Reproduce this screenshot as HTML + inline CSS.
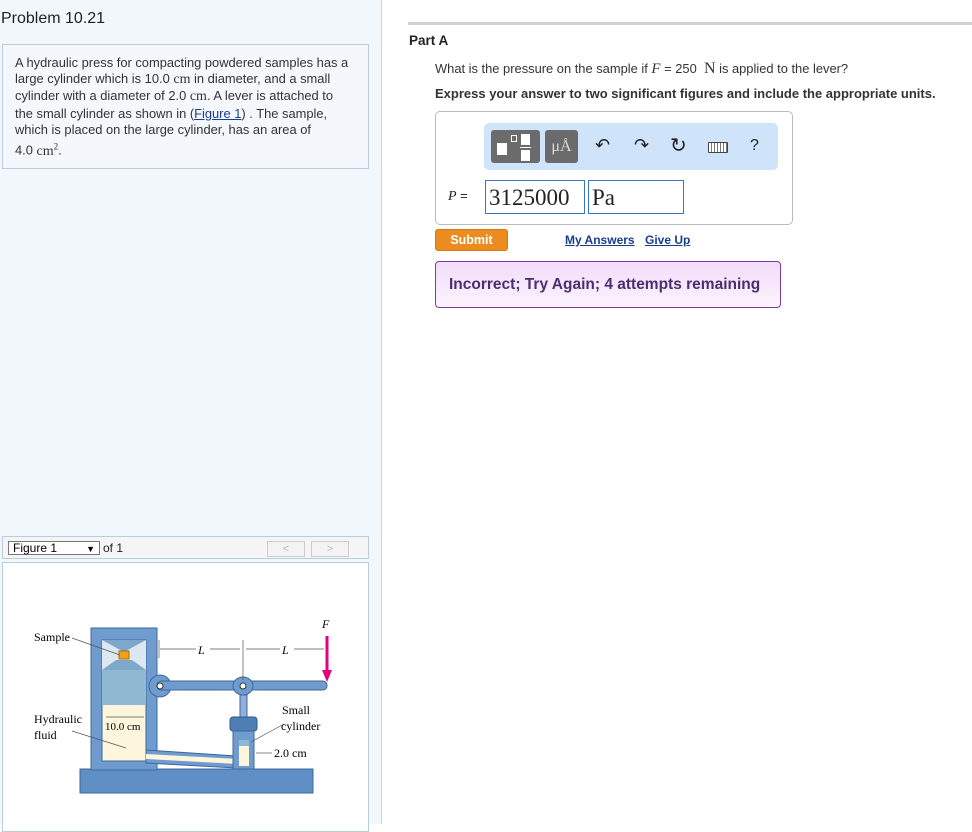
<!DOCTYPE html>
<html><head><meta charset="utf-8">
<style>
*{margin:0;padding:0;box-sizing:border-box}
body{width:972px;height:824px;background:#fff;font-family:"Liberation Sans",Arial,sans-serif;position:relative;overflow:hidden;color:#333}
.left{position:absolute;left:0;top:0;width:382px;height:824px;background:#f2f7fc;border-right:1px solid #c9d9ea}
.title{position:absolute;left:1px;top:10px;font-size:16px;color:#222}
.box{position:absolute;left:2px;top:44px;width:367px;height:125px;border:1px solid #b9cce0;background:#f4f8fc;padding:10px 16px 10px 12px;font-size:12.9px;line-height:16.2px;color:#333}
.box a{color:#1a3e8c;text-decoration:underline}
.m{font-family:"Liberation Serif",serif;font-size:14px}
.fighead{position:absolute;left:2px;top:536px;width:367px;height:23px;border:1px solid #b9cce0;background:#f5f5f5}
.sel{position:absolute;left:5px;top:4px;width:92px;height:14px;border:1px solid #777;background:#fff;font-size:12px;line-height:12px;padding-left:4px;color:#000}
.sel span{position:absolute;right:4px;top:1px;font-size:9px}
.of1{position:absolute;left:100px;top:4px;font-size:12px;color:#222}
.nb{position:absolute;top:4px;width:38px;height:16px;border:1px solid #ccc;background:#f3f3f3;color:#bbb;font-size:11px;text-align:center;line-height:15px}
.figbox{position:absolute;left:2px;top:562px;width:367px;height:270px;border:1px solid #b9cce0;background:#fff}
.hr{position:absolute;left:408px;top:22px;width:564px;height:3px;background:#d2d2d2}
.parta{position:absolute;left:409px;top:33px;font-size:13.5px;font-weight:bold;color:#222}
.q{position:absolute;left:435px;top:60px;font-size:12.9px;color:#333}
.ex{position:absolute;left:435px;top:86px;font-size:13px;font-weight:bold;color:#333}
.ans{position:absolute;left:435px;top:111px;width:358px;height:114px;border:1px solid #bbb;border-radius:5px;background:#fff}
.tb{position:absolute;left:48px;top:11px;width:294px;height:47px;background:#cfe4fb;border-radius:5px}
.b1{position:absolute;left:7px;top:7px;width:49px;height:33px;background:#6b6b6b;border-radius:3px}
.b2{position:absolute;left:61px;top:7px;width:33px;height:33px;background:#6b6b6b;border-radius:3px;color:#ddd;font-family:"Liberation Serif",serif;font-size:16px;text-align:center;line-height:34px}
.ic{position:absolute;top:12px;font-size:18px;color:#222}
.plabel{position:absolute;left:12px;top:76px;font-size:13px;color:#222}
.in1{position:absolute;left:49px;top:68px;width:100px;height:34px;border:1px solid #3b73c9;font-family:"Liberation Serif",serif;font-size:23px;padding-left:3px;line-height:33px;color:#222}
.in2{position:absolute;left:152px;top:68px;width:96px;height:34px;border:1px solid #3b73c9;font-family:"Liberation Serif",serif;font-size:23px;padding-left:3px;line-height:33px;color:#222}
.submit{position:absolute;left:435px;top:229px;width:73px;height:22px;background:#ec8b1f;border:1px solid #d7771a;border-radius:3px;color:#fff;font-weight:bold;font-size:12.5px;text-align:center;line-height:20px}
.lnk{position:absolute;top:233px;font-size:12px;font-weight:bold;color:#1a3e8c;text-decoration:underline}
.inc{position:absolute;left:435px;top:261px;width:346px;height:47px;border:1px solid #7d3b9c;border-radius:4px;background:linear-gradient(#f2dcfa,#fbf3fd);font-weight:bold;font-size:15.5px;color:#4a2f6e;padding-left:13px;line-height:45px}
</style></head><body>
<div class="left">
<div class="title">Problem 10.21</div>
<div class="box">A hydraulic press for compacting powdered samples has a large cylinder which is 10.0 <span class="m">cm</span> in diameter, and a small cylinder with a diameter of 2.0 <span class="m">cm</span>. A lever is attached to<br>the small cylinder as shown in (<a>Figure 1</a>) . The sample,<br>which is placed on the large cylinder, has an area of<br>4.0 <span class="m">cm<sup style="font-size:9px">2</sup></span>.</div>
<div class="fighead"><div class="sel">Figure 1<span>▼</span></div><div class="of1">of 1</div><div class="nb" style="left:264px">&lt;</div><div class="nb" style="left:308px">&gt;</div></div>
<div class="figbox"></div>
<svg style="position:absolute;left:0;top:600px" width="370" height="224" font-family="Liberation Serif,serif" font-size="12">
<rect x="80" y="169" width="233" height="24" fill="#5f8fc4" stroke="#3c6a9c"/>
<rect x="91" y="28" width="66" height="142" fill="#6f9bcf" stroke="#3c6a9c"/>
<circle cx="160" cy="86" r="11" fill="#6f9bcf" stroke="#3c6a9c"/>
<rect x="157" y="81" width="170" height="9" rx="4" fill="#6f9bcf" stroke="#3c6a9c"/>
<circle cx="160" cy="86" r="3" fill="#fff" stroke="#333"/>
<rect x="102" y="40" width="44" height="121" fill="#fdf6dc" stroke="#3c6a9c"/>
<rect x="102" y="40" width="44" height="30" fill="#dde7f2"/>
<path d="M102 40 L124 52 L146 40 Z M102 70 L116 60 L132 60 L146 70 Z" fill="#7ea7cc"/>
<rect x="119" y="51" width="10" height="8" fill="#f0a11c" stroke="#b06d00"/>
<rect x="102" y="70" width="44" height="35" fill="#8fb8d2"/>
<path d="M146 150 L236 156 L236 168 L146 163 Z" fill="#6f9bcf" stroke="#3c6a9c"/>
<path d="M146 154 L238 159 L238 164 L146 159 Z" fill="#fdf6dc"/>
<ellipse cx="243" cy="86" rx="10" ry="9" fill="#6f9bcf" stroke="#3c6a9c"/>
<circle cx="243" cy="86" r="3" fill="#fff" stroke="#333"/>
<rect x="240" y="95" width="7" height="22" fill="#8fb0d8" stroke="#3c6a9c"/>
<rect x="230" y="117" width="27" height="14" rx="3" fill="#4f7fb3" stroke="#2f5a88"/>
<rect x="233" y="131" width="21" height="38" fill="#6f9bcf" stroke="#3c6a9c"/>
<rect x="239" y="140" width="10" height="26" fill="#fdf6dc"/>
<rect x="239" y="140" width="10" height="6" fill="#8fb8d2"/>
<line x1="327" y1="36" x2="327" y2="72" stroke="#e6007e" stroke-width="3"/>
<path d="M322 70 L332 70 L327 82 Z" fill="#e6007e"/>
<text x="322" y="28" font-style="italic">F</text>
<g stroke="#555" stroke-width="0.7"><line x1="160" y1="49" x2="240" y2="49"/><line x1="246" y1="49" x2="324" y2="49"/><line x1="159" y1="40" x2="159" y2="58"/><line x1="243" y1="40" x2="243" y2="80"/><line x1="106" y1="117" x2="144" y2="117"/><line x1="256" y1="153" x2="272" y2="153"/><line x1="72" y1="38" x2="120" y2="55"/><line x1="72" y1="131" x2="126" y2="148"/><line x1="284" y1="124" x2="251" y2="142"/></g>
<rect x="196" y="43" width="14" height="12" fill="#fff"/><text x="198" y="54" font-style="italic">L</text>
<rect x="280" y="43" width="14" height="12" fill="#fff"/><text x="282" y="54" font-style="italic">L</text>
<text x="34" y="41">Sample</text>
<text x="34" y="123">Hydraulic</text><text x="34" y="139">fluid</text>
<text x="105" y="130" font-size="11">10.0 cm</text>
<text x="282" y="114">Small</text><text x="281" y="130">cylinder</text>
<text x="274" y="157">2.0 cm</text>
</svg>
</div>
<div class="hr"></div>
<div class="parta">Part A</div>
<div class="q">What is the pressure on the sample if <i class="m" style="font-size:15px">F</i> = 250 &nbsp;<span class="m" style="font-size:16px">N</span> is applied to the lever?</div>
<div class="ex">Express your answer to two significant figures and include the appropriate units.</div>
<div class="ans">
<div class="tb">
<div class="b1"><div style="position:absolute;left:6px;top:13px;width:10px;height:12px;background:#fff"></div><div style="position:absolute;left:20px;top:5px;width:6px;height:7px;border:1px solid #fff"></div><div style="position:absolute;left:30px;top:4px;width:9px;height:11px;background:#fff"></div><div style="position:absolute;left:29px;top:17px;width:11px;height:1px;background:#fff"></div><div style="position:absolute;left:30px;top:20px;width:9px;height:11px;background:#fff"></div></div>
<div class="b2">μÅ</div>
<div class="ic" style="left:111px">&#x21B6;</div>
<div class="ic" style="left:150px">&#x21B7;</div>
<div class="ic" style="left:186px;font-size:20px;top:10px">&#x21BB;</div>
<div style="position:absolute;left:224px;top:19px;width:20px;height:11px;border:1.5px solid #444;border-radius:1px;background:repeating-linear-gradient(90deg,#fff 0 2px,#777 2px 3px)"></div>
<div class="ic" style="left:266px;font-size:16px;top:14px">?</div>
</div>
<div class="plabel"><i class="m">P</i> =</div>
<div class="in1">3125000</div>
<div class="in2">Pa</div>
</div>
<div class="submit">Submit</div>
<div class="lnk" style="left:565px">My Answers</div>
<div class="lnk" style="left:645px">Give Up</div>
<div class="inc">Incorrect; Try Again; 4 attempts remaining</div>
</body></html>
